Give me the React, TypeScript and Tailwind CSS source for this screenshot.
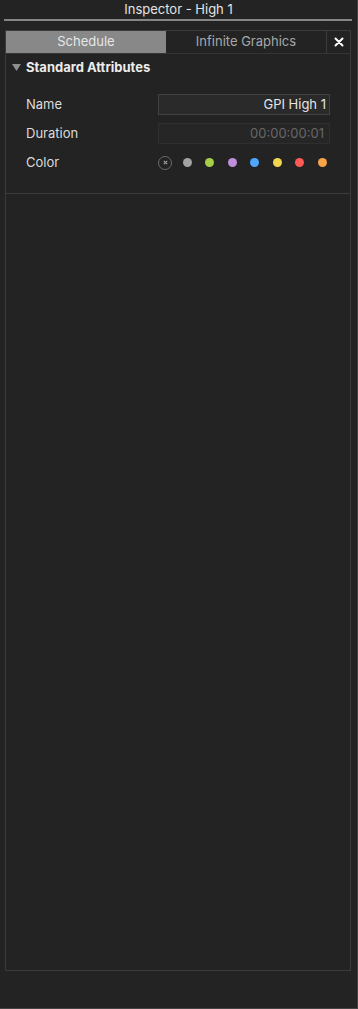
import React from 'react';

const swatches = ['#a3a3a3', '#a6cf48', '#bf8fdb', '#4ea7ff', '#f0d64e', '#ff5a55', '#f7a34a'];

function Row({ label, children }: { label: string; children: React.ReactNode }) {
  return (
    <div className="flex h-[29px] items-center">
      <span className="w-[152px] pl-[20px] text-[13px] text-[#dcdcdc]">{label}</span>
      {children}
    </div>
  );
}

export default function App() {
  return (
    <div
      className="relative h-[1009px] w-[358px] overflow-hidden border-r border-b border-[#444] bg-[#232323]"
      style={{ fontFamily: 'Inter, "Liberation Sans", sans-serif' }}
    >
      <div className="flex h-[19px] items-center justify-center text-[13px] leading-none text-[#e4e4e4]">
        Inspector - High 1
      </div>
      <div className="mx-[4px] h-[2px] w-[348px] bg-[#858585]" />

      <div className="ml-[5px] mt-[9px] flex h-[941px] w-[346px] flex-col border border-[#3b3b3b]">
        {/* tabs */}
        <div className="flex h-[23px] border-b border-[#353535]">
          <div className="flex w-[160px] items-center justify-center bg-[#888888] text-[13px] text-[#e6e6e6]">
            Schedule
          </div>
          <div className="flex flex-1 items-center justify-center border-r border-[#3b3b3b] text-[13px] text-[#a8a8a8]">
            Infinite Graphics
          </div>
          <div className="flex w-[23px] items-center justify-center">
            <svg width="10" height="10" viewBox="0 0 10 10">
              <path d="M1.5 1.5 L8.5 8.5 M8.5 1.5 L1.5 8.5" stroke="#fff" strokeWidth="2" strokeLinecap="round" />
            </svg>
          </div>
        </div>

        {/* section header */}
        <div className="flex h-[28px] items-center">
          <svg className="ml-[6px]" width="9" height="8" viewBox="0 0 9 8">
            <path d="M0 0 L9 0 L4.5 7 Z" fill="#8e8e8e" />
          </svg>
          <span className="ml-[5px] text-[13px] font-bold text-[#ececec]">Standard Attributes</span>
        </div>

        <div className="mt-[8px] flex flex-col">
          <Row label="Name">
            <div className="flex h-[21px] w-[172px] items-center justify-end border border-[#414141] bg-[#2a2a2a] pr-[3px] text-[13px] text-[#e6e6e6]">
              GPI High 1
            </div>
          </Row>
          <Row label="Duration">
            <div className="flex h-[21px] w-[172px] items-center justify-end border border-[#2f2f2f] bg-[#262626] pr-[5px] text-[13px] text-[#676767]">
              00:00:00:01
            </div>
          </Row>
          <Row label="Color">
            <div className="flex items-center gap-[13.5px]">
              <div className="mr-[-3px] flex h-[14px] w-[14px] items-center justify-center rounded-full border border-[#6a6a6a]">
                <svg width="5" height="5" viewBox="0 0 5 5">
                  <path d="M0.8 0.8 L4.2 4.2 M4.2 0.8 L0.8 4.2" stroke="#9a9a9a" strokeWidth="1.2" />
                </svg>
              </div>
              {swatches.map((c) => (
                <div key={c} className="h-[9px] w-[9px] rounded-full" style={{ backgroundColor: c }} />
              ))}
            </div>
          </Row>
        </div>

        <div className="mt-[16px] h-px w-full bg-[#3b3b3b]" />
      </div>
    </div>
  );
}
